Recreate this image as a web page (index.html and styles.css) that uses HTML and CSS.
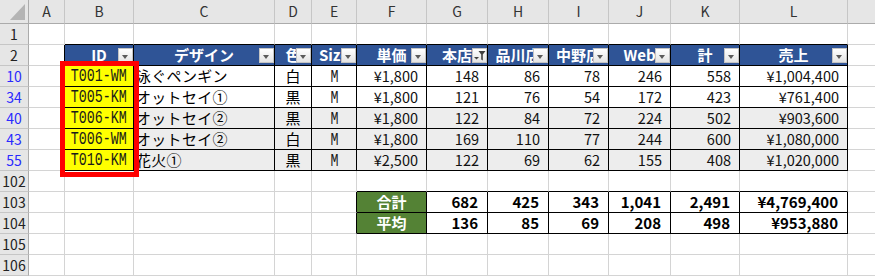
FILE: index.html
```html
<!DOCTYPE html>
<html lang="ja">
<head>
<meta charset="utf-8">
<title>Sheet</title>
<link rel="stylesheet" href="styles.css">
</head>
<body>
<div class="sheet">
  <!-- column headers -->
  <div class="corner"><svg width="15" height="16" viewBox="0 0 15 16"><polygon points="15,0 15,16 0,16" fill="#b4b4b4"/></svg></div>
  <div class="ch">A</div><div class="ch">B</div><div class="ch">C</div><div class="ch">D</div><div class="ch">E</div><div class="ch">F</div><div class="ch">G</div><div class="ch">H</div><div class="ch">I</div><div class="ch">J</div><div class="ch">K</div><div class="ch">L</div><div class="ch"></div>

  <!-- row 1 -->
  <div class="rh">1</div><div></div>
  <div class="bb"></div><div class="bb"></div><div class="bb"></div><div class="bb"></div><div class="bb"></div><div class="bb"></div><div class="bb"></div><div class="bb"></div><div class="bb"></div><div class="bb"></div><div class="bb"></div>
  <div></div>

  <!-- row 2: table header -->
  <div class="rh">2</div><div class="br"></div>
  <div class="th">ID<span class="dd arr"></span></div>
  <div class="th">デザイン<span class="dd arr"></span></div>
  <div class="th">色<span class="dd arr"></span></div>
  <div class="th">Size<span class="dd arr"></span></div>
  <div class="th">単価<span class="dd arr"></span></div>
  <div class="th">本店<span class="dd"><svg width="13" height="13" viewBox="0 0 13 13"><polygon points="1,8 6,8 3.5,10.5" fill="#404040"/><polygon points="5.5,2 12.5,2 9.8,5.5 9.8,11.5 8.2,10.5 8.2,5.5" fill="#404040"/></svg></span></div>
  <div class="th">品川店<span class="dd arr"></span></div>
  <div class="th">中野店<span class="dd arr"></span></div>
  <div class="th">Web<span class="dd arr"></span></div>
  <div class="th">計<span class="dd arr"></span></div>
  <div class="th">売上<span class="dd arr"></span></div>
  <div></div>

  <!-- row 10 -->
  <div class="rh f">10</div><div class="br"></div>
  <div class="td id"><span class="mono">T001-WM</span></div>
  <div class="td jp">泳ぐペンギン</div>
  <div class="td ctr">白</div>
  <div class="td ctr"><span class="mono">M</span></div>
  <div class="td num">¥1,800</div>
  <div class="td num">148</div>
  <div class="td num">86</div>
  <div class="td num">78</div>
  <div class="td num">246</div>
  <div class="td num">558</div>
  <div class="td num">¥1,004,400</div>
  <div></div>

  <!-- row 34 -->
  <div class="rh f">34</div><div class="br"></div>
  <div class="td id"><span class="mono">T005-KM</span></div>
  <div class="td jp">オットセイ①</div>
  <div class="td ctr">黒</div>
  <div class="td ctr"><span class="mono">M</span></div>
  <div class="td num">¥1,800</div>
  <div class="td num">121</div>
  <div class="td num">76</div>
  <div class="td num">54</div>
  <div class="td num">172</div>
  <div class="td num">423</div>
  <div class="td num">¥761,400</div>
  <div></div>

  <!-- row 40 -->
  <div class="rh f">40</div><div class="br"></div>
  <div class="td id"><span class="mono">T006-KM</span></div>
  <div class="td jp alt">オットセイ②</div>
  <div class="td ctr alt">黒</div>
  <div class="td ctr alt"><span class="mono">M</span></div>
  <div class="td num alt">¥1,800</div>
  <div class="td num alt">122</div>
  <div class="td num alt">84</div>
  <div class="td num alt">72</div>
  <div class="td num alt">224</div>
  <div class="td num alt">502</div>
  <div class="td num alt">¥903,600</div>
  <div></div>

  <!-- row 43 -->
  <div class="rh f">43</div><div class="br"></div>
  <div class="td id"><span class="mono">T006-WM</span></div>
  <div class="td jp alt">オットセイ②</div>
  <div class="td ctr alt">白</div>
  <div class="td ctr alt"><span class="mono">M</span></div>
  <div class="td num alt">¥1,800</div>
  <div class="td num alt">169</div>
  <div class="td num alt">110</div>
  <div class="td num alt">77</div>
  <div class="td num alt">244</div>
  <div class="td num alt">600</div>
  <div class="td num alt">¥1,080,000</div>
  <div></div>

  <!-- row 55 -->
  <div class="rh f">55</div><div class="br"></div>
  <div class="td id"><span class="mono">T010-KM</span></div>
  <div class="td jp alt">花火①</div>
  <div class="td ctr alt">黒</div>
  <div class="td ctr alt"><span class="mono">M</span></div>
  <div class="td num alt">¥2,500</div>
  <div class="td num alt">122</div>
  <div class="td num alt">69</div>
  <div class="td num alt">62</div>
  <div class="td num alt">155</div>
  <div class="td num alt">408</div>
  <div class="td num alt">¥1,020,000</div>
  <div></div>

  <!-- row 102 -->
  <div class="rh">102</div>
  <div></div><div></div><div></div><div></div><div></div>
  <div class="bb"></div><div class="bb"></div><div class="bb"></div><div class="bb"></div><div class="bb"></div><div class="bb"></div><div class="bb"></div>
  <div></div>

  <!-- row 103 -->
  <div class="rh">103</div>
  <div></div><div></div><div></div><div></div><div class="br"></div>
  <div class="lbl">合計</div>
  <div class="tot">682</div>
  <div class="tot">425</div>
  <div class="tot">343</div>
  <div class="tot">1,041</div>
  <div class="tot">2,491</div>
  <div class="tot">¥4,769,400</div>
  <div></div>

  <!-- row 104 -->
  <div class="rh">104</div>
  <div></div><div></div><div></div><div></div><div class="br"></div>
  <div class="lbl">平均</div>
  <div class="tot">136</div>
  <div class="tot">85</div>
  <div class="tot">69</div>
  <div class="tot">208</div>
  <div class="tot">498</div>
  <div class="tot">¥953,880</div>
  <div></div>

  <!-- row 105 -->
  <div class="rh">105</div>
  <div></div><div></div><div></div><div></div><div></div><div></div><div></div><div></div><div></div><div></div><div></div><div></div><div></div>

  <!-- row 106 -->
  <div class="rh">106</div>
  <div></div><div></div><div></div><div></div><div></div><div></div><div></div><div></div><div></div><div></div><div></div><div></div><div></div>

  <!-- selection highlight -->
  <div class="sel"></div>
</div>
</body>
</html>
```

FILE: styles.css
```css
html, body {
  margin: 0;
  padding: 0;
  background: #ffffff;
  overflow: hidden;
}

.sheet {
  display: grid;
  grid-template-columns: 29px 36px 69px 141px 37px 45px 70px 61px 61px 60px 62px 69px 108px 60px;
  grid-template-rows: 24px;
  grid-auto-rows: 21px;
  position: relative;
  font-family: "Noto Sans CJK JP", "Noto Sans", sans-serif;
  font-size: 14.5px;
  color: #000000;
}

.sheet > div {
  box-sizing: border-box;
  border-right: 1px solid #d4d4d4;
  border-bottom: 1px solid #d4d4d4;
  line-height: 20px;
  white-space: nowrap;
  overflow: hidden;
}

.sheet .corner {
  background: #e6e6e6;
  border-right-color: #ababab;
  border-bottom-color: #ababab;
  display: flex;
  align-items: flex-end;
  justify-content: flex-end;
  padding: 0 3px 3px 0;
}
.sheet .corner svg { display: block; }

.sheet .ch {
  background: #e6e6e6;
  text-align: center;
  line-height: 23px;
  font-size: 14px;
  color: #333333;
  border-right-color: #c6c6c6;
  border-bottom-color: #ababab;
}

.sheet .rh {
  background: #e6e6e6;
  text-align: center;
  font-size: 14px;
  color: #222222;
  border-right-color: #ababab;
  border-bottom-color: #c6c6c6;
}
.sheet .rh.f { color: #2a2aff; }

.sheet .bb { border-bottom-color: #000000; }
.sheet .br { border-right-color: #000000; }

.sheet .th {
  position: relative;
  background: #2f5496;
  color: #ffffff;
  font-weight: 700;
  font-size: 15px;
  text-align: center;
  border-right-color: #000000;
  border-bottom-color: #000000;
}

.dd {
  position: absolute;
  right: 0;
  top: 3px;
  width: 15px;
  height: 15px;
  box-sizing: border-box;
  border: 1px solid #c4c4c4;
  background: linear-gradient(#ffffff, #e4e4e4);
}
.dd svg { display: block; }
.dd.arr::after {
  content: "";
  position: absolute;
  left: 3px;
  top: 6px;
  width: 0;
  height: 0;
  border-left: 3.5px solid transparent;
  border-right: 3.5px solid transparent;
  border-top: 4px solid #5a5a5a;
}

.sheet .td {
  border-right-color: #000000;
  border-bottom-color: #000000;
}
.sheet .alt { background: #ededed; }

.sheet .id {
  background: #ffff00;
  display: flex;
  justify-content: center;
}

.mono {
  display: inline-block;
  font-family: "Liberation Mono", "DejaVu Sans Mono", monospace;
  font-size: 18px;
  transform: scaleX(0.74);
  color: #1a1a1a;
}

.sheet .jp {
  padding-left: 2px;
  font-size: 15px;
  letter-spacing: 0.3px;
}
.sheet .ctr { text-align: center; font-size: 15px; }
.sheet .num {
  text-align: right;
  padding-right: 8px;
  color: #111111;
}

.sheet .lbl {
  background: #548235;
  color: #ffffff;
  font-weight: 700;
  font-size: 15px;
  text-align: center;
  border-right-color: #000000;
  border-bottom-color: #000000;
}
.sheet .tot {
  font-weight: 700;
  font-size: 15px;
  text-align: right;
  padding-right: 9px;
  border-right-color: #000000;
  border-bottom-color: #000000;
}

.sheet .sel {
  position: absolute;
  left: 60px;
  top: 61px;
  width: 79px;
  height: 116px;
  box-sizing: border-box;
  border: 5px solid #ff0000;
  background: transparent;
  overflow: visible;
}
```
